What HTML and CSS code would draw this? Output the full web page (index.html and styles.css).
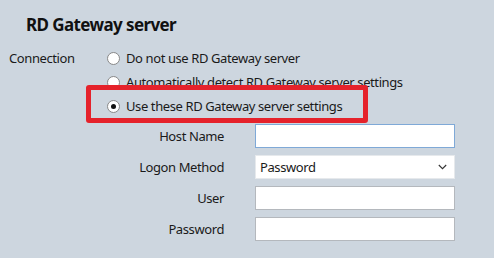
FILE: index.html
```html
<!DOCTYPE html>
<html>
<head>
<meta charset="utf-8">
<link rel="stylesheet" href="styles.css">
</head>
<body>
<div class="page">
  <h1 class="title">RD Gateway server</h1>
  <div class="conn">
    <div class="conn-label">Connection</div>
    <div class="options">
      <div class="opt"><span class="radio"></span><span>Do not use RD Gateway server</span></div>
      <div class="opt"><span class="radio"></span><span>Automatically detect RD Gateway server settings</span></div>
      <div class="opt highlight"><span class="radio checked"></span><span>Use these RD Gateway server settings</span></div>
    </div>
  </div>
  <div class="fields">
    <div class="flabel">Host Name</div>
    <div class="input focus"></div>
    <div class="flabel">Logon Method</div>
    <div class="select"><span>Password</span>
      <svg class="chev" width="9" height="6" viewBox="0 0 9 6"><path d="M0.8 1 L4.5 4.7 L8.2 1" fill="none" stroke="#333" stroke-width="1.1"/></svg>
    </div>
    <div class="flabel">User</div>
    <div class="input"></div>
    <div class="flabel">Password</div>
    <div class="input"></div>
  </div>
</div>
</body>
</html>
```
FILE: styles.css
```css
html, body {
  margin: 0;
  padding: 0;
  background: #cdd6df;
}
body {
  width: 494px;
  height: 258px;
  overflow: hidden;
  font-family: "Noto Sans", "Open Sans", sans-serif;
  font-size: 13px;
  letter-spacing: -0.4px;
  color: #1a1a1a;
}
.page {
  padding-top: 13px;
}
.title {
  margin: 0 0 0 26px;
  font-size: 17px;
  letter-spacing: -0.6px;
  font-weight: bold;
  line-height: 24px;
  color: #111;
}
.conn {
  display: flex;
  margin-top: 9px;
}
.conn-label {
  width: 98px;
  padding-left: 9px;
  line-height: 24px;
}
.options {
  display: flex;
  flex-direction: column;
}
.opt {
  display: flex;
  align-items: center;
  height: 24px;
  position: relative;
}
.highlight::before {
  content: "";
  position: absolute;
  left: -21px;
  top: -9px;
  width: 272px;
  height: 28px;
  border: 5px solid #e5222b;
  border-radius: 3px;
}
.radio {
  width: 11px;
  height: 11px;
  border: 1px solid #888;
  border-radius: 50%;
  background: #fff;
  margin-right: 6px;
  box-sizing: content-box;
  position: relative;
}
.radio.checked::after {
  content: "";
  position: absolute;
  left: 3px;
  top: 3px;
  width: 5px;
  height: 5px;
  border-radius: 50%;
  background: #111;
}
.fields {
  display: grid;
  grid-template-columns: 224px 200px;
  column-gap: 31px;
  row-gap: 7px;
  grid-auto-rows: 24px;
  margin-top: 6px;
}
.flabel {
  text-align: right;
  line-height: 24px;
}
.input {
  background: #fff;
  border: 1px solid #b4b8bd;
  box-sizing: border-box;
}
.input.focus {
  border-color: #7fa9d7;
}
.select {
  background: #fff;
  border: 1px solid #e6e9ec;
  box-sizing: border-box;
  display: flex;
  align-items: center;
  justify-content: space-between;
  padding: 0 7px 0 4px;
}
.chev {
  display: block;
}
```
